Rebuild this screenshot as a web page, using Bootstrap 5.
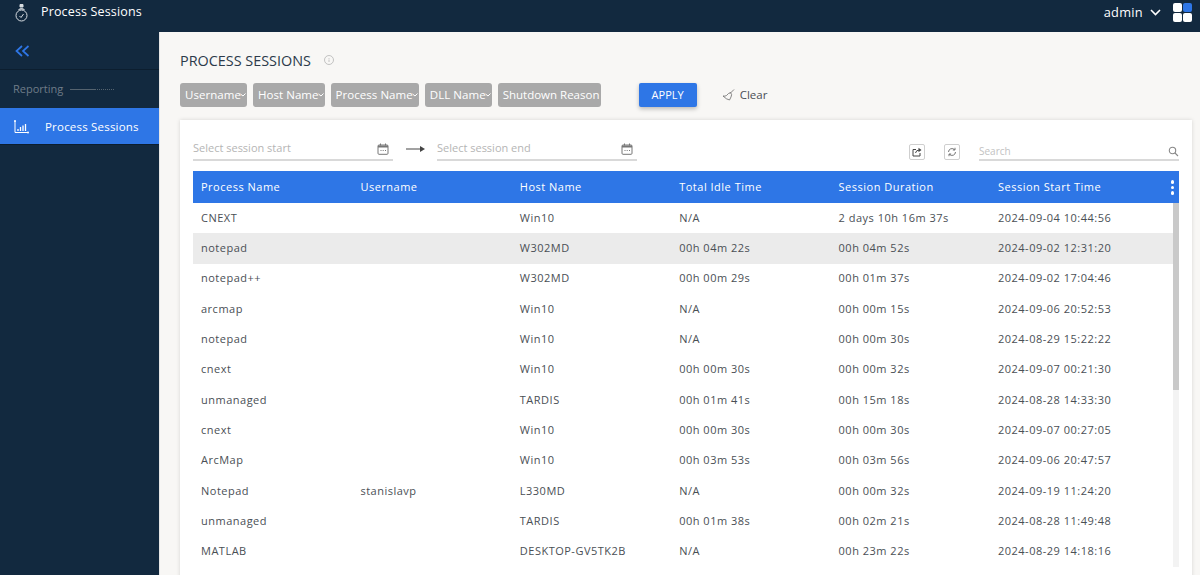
<!DOCTYPE html>
<html lang="en">
<head>
<meta charset="UTF-8">
<title>Process Sessions</title>
<link href="https://cdn.jsdelivr.net/npm/bootstrap@5.3.1/dist/css/bootstrap.min.css" rel="stylesheet">
<style>
html, body { height: 575px; overflow: hidden; }
body { font-family: "Open Sans", sans-serif; background: #12293f; color: #4a4f55; }
.topbar { height: 32px; background: #12293f; color: #fff; padding: 0 8px 7px 15px; }
.topbar-title { font-size: 12.5px; margin-left: 13px; letter-spacing: .15px; }
.admin-name { font-size: 12.8px; margin-right: 7px; letter-spacing: .3px; }
.tiles { display: grid; grid-template-columns: 9px 9px; gap: 1px; margin-left: 12px; }
.tiles span { height: 9px; width: 9px; background: #fff; border-radius: 2px; }
.tiles span.on { background: #2e76e6; }
.shell { height: 543px; }
.sidebar { width: 159px; background: #12293f; flex: none; }
.collapse-row { height: 38px; border-bottom: 1px solid #0c1e2f; padding-left: 15px; }
.section-row { height: 38px; padding-left: 13px; font-size: 11px; color: #6f7c88; }
.section-rule { width: 24px; margin-left: 7px; border-top: 1px solid #55636f; }
.section-dots { width: 20px; border-top: 1px dotted #55636f; }
.side-item { height: 37px; background: #2e76e6; color: #fff; font-size: 11.5px; padding: 1px 0 0 14px; letter-spacing: .2px; border-bottom: 1px solid #0c1e2f; }
.side-item svg { margin-right: 16px; }
.content { background: #f8f7f5; padding: 0 8px 0 20px; border-left: 1px solid #e6e6e6; }
.page-title { font-size: 14.4px; color: #2c3a4a; margin: 19px 0 0; line-height: 20px; font-weight: 400; }
.info-dot { margin-left: 13px; }
.filter-row { margin-top: 12px; height: 24px; }
.chip { height: 24px; background: #a9a9a9; color: #fff; font-size: 11.5px; border-radius: 3px; padding: 0 1px 0 5px; margin-right: 6px; letter-spacing: .05px; }
.chip svg { margin-left: -1px; }
.chip-last { width: 103px; white-space: nowrap; overflow: hidden; letter-spacing: 0; }
.btn.apply-btn { width: 58px; height: 24px; padding: 0; margin-left: 32px; font-size: 11px; background: #2e76e6; border: 0; border-radius: 2px; color: #fff; box-shadow: 0 2px 4px rgba(0,0,0,.25); }
.clear-link { margin-left: 25px; font-size: 11.5px; color: #4a4f55; }
.clear-link svg { margin-right: 5px; }
.sheet { background: #fff; margin-top: 13px; height: 470px; padding: 0 13px; box-shadow: 0 0 4px rgba(0,0,0,.14); }
.tools-row { height: 51px; }
.date-box { width: 200px; height: 24px; margin-top: 17px; padding: 1px 4px 0 0; border-bottom: 2px solid #d9d9d9; font-size: 11px; color: #b5b5b5; }
.date-arrow { margin: 17px 12px 0 13px; }
.sq-btn { width: 16px; height: 16px; border: 1px solid #cfcfcf; border-radius: 2px; margin-top: 24px; }
.sq-next { margin-left: 19px; }
.search-box { width: 200px; height: 21px; margin: 20px 0 0 19px; border-bottom: 2px solid #d9d9d9; font-size: 10px; color: #c2c2c2; padding-top: 4px; }
.table-wrap { position: relative; }
.table.sessions { table-layout: fixed; width: 986px; margin: 0; font-size: 11px; letter-spacing: .5px; }
.table.sessions th { width: 159.4px; height: 32px; background: #2e76e6; color: #fff; font-weight: 400; padding: 0 8px; vertical-align: middle; border: 0; }
.table.sessions th:last-child { width: 189px; }
.table.sessions td { height: 30.3px; padding: 0 8px; vertical-align: middle; color: #4a4f55; border: 0; background: transparent; box-shadow: none; }
.table.sessions tr.picked td { background: #ebebeb; }
.col-menu { position: absolute; right: 5px; top: 9px; display: flex; flex-direction: column; gap: 2px; }
.col-menu i { width: 3.5px; height: 3.5px; border-radius: 50%; background: #fff; display: block; }
.scroll-rail { position: absolute; right: 0; top: 32px; bottom: 0; width: 6px; background: #f3f3f3; }
.scroll-thumb { height: 187px; background: #c9c9c9; }
</style>
</head>
<body>
<div class="topbar d-flex align-items-center">
    <svg width="13" height="20" viewBox="0 0 13 20" fill="none" stroke="#d8dde2" stroke-width="1">
        <circle cx="6.5" cy="12.5" r="5.5"/>
        <path d="M5 1.5h3v2.5h-3z" fill="#d8dde2"/>
        <path d="M3.5 6.5q3-2 6 0" fill="#d8dde2"/>
        <path d="M4.5 13l1.5 1.5 2.5-3.5"/>
    </svg>
    <span class="topbar-title">Process Sessions</span>
    <span class="ms-auto admin-name">admin</span>
    <svg width="11" height="7" viewBox="0 0 11 7" fill="none" stroke="#fff" stroke-width="1.6"><path d="M1 1l4.500 4.500L10 1"/></svg>
    <div class="tiles"><span></span><span class="on"></span><span></span><span></span></div>
</div>

<div class="shell d-flex">
    <aside class="sidebar">
        <div class="collapse-row d-flex align-items-center">
            <svg width="15" height="12" viewBox="0 0 15 12" fill="none" stroke="#2e76e6" stroke-width="1.700"><path d="M7 1L1.500 6 7 11M13.500 1L8 6l5.500 5"/></svg>
        </div>
        <div class="section-row d-flex align-items-center">Reporting<span class="section-rule"></span><span class="section-dots"></span></div>
        <div class="side-item d-flex align-items-center">
            <svg width="15" height="14" viewBox="0 0 15 14" fill="none" stroke="#fff" stroke-width="1"><path d="M1 1v11.500h13"/><circle cx="1" cy="1" r="1" fill="#fff" stroke="none"/><circle cx="14" cy="12.500" r="1" fill="#fff" stroke="none"/><path d="M4 11V9M6.500 11V7M9 11V5.500M11.500 11V4" stroke-width="1.300"/></svg>
            Process Sessions
        </div>
    </aside>

    <main class="content flex-grow-1">
        <div class="d-flex align-items-center">
            <h1 class="page-title">PROCESS SESSIONS</h1>
            <svg class="info-dot mt-3" width="10" height="10" viewBox="0 0 10 10" fill="none" stroke="#b5b5b5" stroke-width=".8"><circle cx="5" cy="5" r="4.500"/><path d="M5 4.500v2.500M5 3v.8"/></svg>
        </div>

        <div class="filter-row d-flex align-items-center">
            <span class="chip d-flex align-items-center">Username<svg width="6" height="4" viewBox="0 0 6 4" fill="none" stroke="#fff"><path d="M.5 1l2.500 2L5.500 .5"/></svg></span>
            <span class="chip d-flex align-items-center">Host Name<svg width="6" height="4" viewBox="0 0 6 4" fill="none" stroke="#fff"><path d="M.5 1l2.500 2L5.500 .5"/></svg></span>
            <span class="chip d-flex align-items-center">Process Name<svg width="6" height="4" viewBox="0 0 6 4" fill="none" stroke="#fff"><path d="M.5 1l2.500 2L5.500 .5"/></svg></span>
            <span class="chip d-flex align-items-center">DLL Name<svg width="6" height="4" viewBox="0 0 6 4" fill="none" stroke="#fff"><path d="M.5 1l2.500 2L5.500 .5"/></svg></span>
            <span class="chip chip-last d-flex align-items-center">Shutdown Reason</span>
            <button type="button" class="btn apply-btn">APPLY</button>
            <span class="clear-link d-flex align-items-center">
                <svg width="13" height="12" viewBox="0 0 13 12" fill="none" stroke="#6a6a6a" stroke-width=".8"><path d="M12 .5L8 4.500"/><path d="M8.500 3.500q2 2 .5 4.500l-1.500 3q-3-.5-6.500-4 2 .5 3.500-.5 2-2.500 4-3z"/></svg>
                Clear
            </span>
        </div>

        <div class="sheet">
            <div class="tools-row d-flex">
                <div class="date-box d-flex align-items-center justify-content-between">Select session start
                    <svg width="12" height="12" viewBox="0 0 12 12" fill="none" stroke="#777"><rect x="1" y="2" width="10" height="9.300" rx="1"/><path d="M1 3.500h10" stroke-width="2"/><path d="M3.500 .5v2M8.500 .5v2M3.500 7.500h1M5.700 7.500h1M8 7.500h1"/></svg>
                </div>
                <svg class="date-arrow" width="19" height="22" viewBox="0 0 19 22" fill="#444"><path d="M0 11.500h15v1H0z"/><path d="M14 9l5 3-5 3z"/></svg>
                <div class="date-box d-flex align-items-center justify-content-between">Select session end
                    <svg width="12" height="12" viewBox="0 0 12 12" fill="none" stroke="#777"><rect x="1" y="2" width="10" height="9.300" rx="1"/><path d="M1 3.500h10" stroke-width="2"/><path d="M3.500 .5v2M8.500 .5v2M3.500 7.500h1M5.700 7.500h1M8 7.500h1"/></svg>
                </div>
                <div class="sq-btn d-flex align-items-center justify-content-center ms-auto">
                    <svg width="10" height="10" viewBox="0 0 10 10" fill="none" stroke="#444"><path d="M4 2.500H1v6.500h7V6"/><path d="M3.500 6q.5-3 4-3" /><path d="M6.500 .8L9.500 3 6.500 5.200z" fill="#444" stroke="none"/></svg>
                </div>
                <div class="sq-btn sq-next d-flex align-items-center justify-content-center">
                    <svg width="10" height="10" viewBox="0 0 10 10" fill="none" stroke="#555" stroke-width=".8"><path d="M1.500 5a3.500 3.500 0 0 1 6-2.400M8.500 5a3.500 3.500 0 0 1-6 2.400"/><path d="M8 .8v2.200H5.800M2 9.200V7h2.200"/></svg>
                </div>
                <div class="search-box d-flex align-items-center justify-content-between">Search
                    <svg width="11" height="11" viewBox="0 0 11 11" fill="none" stroke="#888" stroke-width="1.100"><circle cx="4.500" cy="4.500" r="3.200"/><path d="M7 7l3 3"/></svg>
                </div>
            </div>

            <div class="table-wrap">
                <table class="table sessions">
                    <thead>
                        <tr><th>Process Name</th><th>Username</th><th>Host Name</th><th>Total Idle Time</th><th>Session Duration</th><th>Session Start Time</th></tr>
                    </thead>
                    <tbody id="rows"></tbody>
                </table>
                <div class="col-menu"><i></i><i></i><i></i></div>
                <div class="scroll-rail"><div class="scroll-thumb"></div></div>
            </div>
        </div>
    </main>
</div>

<script>
    const sessions = [
        ["CNEXT", "", "Win10", "N/A", "2 days 10h 16m 37s", "2024-09-04 10:44:56"],
        ["notepad", "", "W302MD", "00h 04m 22s", "00h 04m 52s", "2024-09-02 12:31:20"],
        ["notepad++", "", "W302MD", "00h 00m 29s", "00h 01m 37s", "2024-09-02 17:04:46"],
        ["arcmap", "", "Win10", "N/A", "00h 00m 15s", "2024-09-06 20:52:53"],
        ["notepad", "", "Win10", "N/A", "00h 00m 30s", "2024-08-29 15:22:22"],
        ["cnext", "", "Win10", "00h 00m 30s", "00h 00m 32s", "2024-09-07 00:21:30"],
        ["unmanaged", "", "TARDIS", "00h 01m 41s", "00h 15m 18s", "2024-08-28 14:33:30"],
        ["cnext", "", "Win10", "00h 00m 30s", "00h 00m 30s", "2024-09-07 00:27:05"],
        ["ArcMap", "", "Win10", "00h 03m 53s", "00h 03m 56s", "2024-09-06 20:47:57"],
        ["Notepad", "stanislavp", "L330MD", "N/A", "00h 00m 32s", "2024-09-19 11:24:20"],
        ["unmanaged", "", "TARDIS", "00h 01m 38s", "00h 02m 21s", "2024-08-28 11:49:48"],
        ["MATLAB", "", "DESKTOP-GV5TK2B", "N/A", "00h 23m 22s", "2024-08-29 14:18:16"]
    ];
    document.getElementById("rows").innerHTML = sessions.map((row, i) =>
        `<tr class="${i === 1 ? "picked" : ""}">${row.map(cell => `<td>${cell}</td>`).join("")}</tr>`
    ).join("");
</script>
<script src="https://cdn.jsdelivr.net/npm/bootstrap@5.3.1/dist/js/bootstrap.bundle.min.js"></script>
</body>
</html>
